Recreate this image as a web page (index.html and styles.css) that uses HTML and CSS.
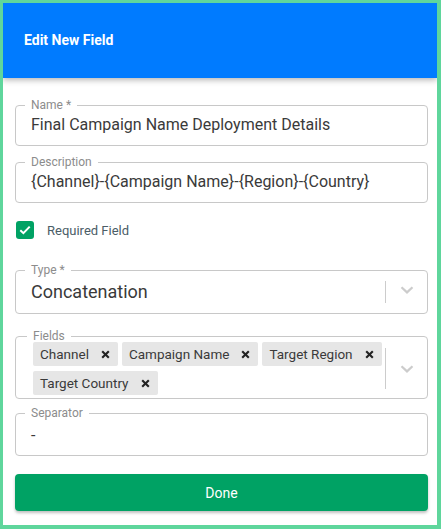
FILE: index.html
```html
<!DOCTYPE html>
<html lang="en">
<head>
<meta charset="utf-8">
<title>Edit New Field</title>
<link rel="stylesheet" href="styles.css">
</head>
<body>
<div class="frame">
  <header class="header">
    <h1 class="title">Edit New Field</h1>
  </header>
  <main class="content">
    <fieldset class="field field-name">
      <legend class="label">Name *</legend>
      <div class="value">Final Campaign Name Deployment Details</div>
    </fieldset>
    <fieldset class="field field-desc">
      <legend class="label">Description</legend>
      <div class="value">{Channel}-{Campaign Name}-{Region}-{Country}</div>
    </fieldset>
    <label class="check-row">
      <span class="checkbox">
        <svg width="12" height="10" viewBox="0 0 12 10"><path d="M1.3 5.2 L4.4 8.2 L10.7 1.6" fill="none" stroke="#fff" stroke-width="2"/></svg>
      </span>
      <span class="check-label">Required Field</span>
    </label>
    <fieldset class="field select field-type">
      <legend class="label">Type *</legend>
      <div class="select-row">
        <div class="value big">Concatenation</div>
        <span class="sep sep-type"></span>
        <span class="indicator">
          <svg width="14" height="8" viewBox="0 0 14 8"><path d="M1.5 1.2 L7 6.4 L12.5 1.2" fill="none" stroke="#cccccc" stroke-width="2.2"/></svg>
        </span>
      </div>
    </fieldset>
    <fieldset class="field select field-fields">
      <legend class="label">Fields</legend>
      <div class="select-row">
        <div class="chips">
          <span class="chip">Channel<svg class="x" width="9" height="9" viewBox="0 0 9 9"><path d="M1.2 1.2 L7.8 7.8 M7.8 1.2 L1.2 7.8" stroke="#222" stroke-width="2.1"/></svg></span>
          <span class="chip">Campaign Name<svg class="x" width="9" height="9" viewBox="0 0 9 9"><path d="M1.2 1.2 L7.8 7.8 M7.8 1.2 L1.2 7.8" stroke="#222" stroke-width="2.1"/></svg></span>
          <span class="chip">Target Region<svg class="x" width="9" height="9" viewBox="0 0 9 9"><path d="M1.2 1.2 L7.8 7.8 M7.8 1.2 L1.2 7.8" stroke="#222" stroke-width="2.1"/></svg></span>
          <span class="chip">Target Country<svg class="x" width="9" height="9" viewBox="0 0 9 9"><path d="M1.2 1.2 L7.8 7.8 M7.8 1.2 L1.2 7.8" stroke="#222" stroke-width="2.1"/></svg></span>
        </div>
        <span class="sep sep-fields"></span>
        <span class="indicator">
          <svg width="14" height="8" viewBox="0 0 14 8"><path d="M1.5 1.2 L7 6.4 L12.5 1.2" fill="none" stroke="#cccccc" stroke-width="2.2"/></svg>
        </span>
      </div>
    </fieldset>
    <fieldset class="field field-sep">
      <legend class="label">Separator</legend>
      <div class="value">-</div>
    </fieldset>
    <button class="done" type="button">Done</button>
  </main>
</div>
</body>
</html>
```
FILE: styles.css
```css
* { box-sizing: border-box; }
html, body { margin: 0; padding: 0; background: #fff; }
body { font-family: Roboto, "Liberation Sans", Arial, sans-serif; }

.frame {
  width: 441px;
  height: 529px;
  border-style: solid;
  border-color: #5fd69c;
  border-width: 3px 4px 4px 3px;
  background: #fff;
  overflow: hidden;
}

.header {
  height: 75px;
  background: #007bff;
  display: flex;
  align-items: center;
  padding-left: 21px;
  box-shadow: 0 2px 6px rgba(0, 0, 0, 0.3);
  position: relative;
}
.title {
  margin: 0;
  color: #fff;
  font-size: 14px;
  font-weight: 700;
  padding-bottom: 1px;
}

.content {
  padding: 21px 9px 0 12px;
  display: flex;
  flex-direction: column;
}

.field {
  margin: 0;
  border: 1px solid #c8c8c8;
  border-radius: 4px;
  padding: 0 15px 9px 15px;
  min-width: 0;
}
.label {
  margin-left: -6px;
  padding: 0 6px;
  font-size: 12px;
  line-height: 12px;
  color: #8c8c8c;
}
.value {
  font-size: 16px;
  line-height: 20px;
  color: #3a3a3a;
  padding-top: 4px;
  white-space: nowrap;
}
.field-name { padding-bottom: 10px; }
.field-desc { margin-top: 10px; padding-bottom: 10px; }

.check-row {
  display: flex;
  align-items: center;
  margin-top: 18px;
  padding-left: 1px;
}
.checkbox {
  width: 18px;
  height: 18px;
  border-radius: 3px;
  background: #00a264;
  display: flex;
  align-items: center;
  justify-content: center;
}
.check-label {
  margin-left: 13px;
  font-size: 13px;
  color: #4b5d67;
}

.select { padding-right: 0; }
.select-row {
  display: flex;
  align-items: center;
}
.select-row .value { flex: 1; }
.value.big {
  font-size: 18px;
  line-height: 24px;
  padding-top: 4px;
}
.field-type { margin-top: 25px; padding-bottom: 9px; }

.sep {
  width: 1px;
  background: #cccccc;
  flex: none;
}
.sep-type { height: 22px; margin-top: 4px; }
.sep-fields { height: 41px; }

.indicator {
  width: 41px;
  flex: none;
  display: flex;
  justify-content: center;
  align-items: center;
}

.field-fields { margin-top: 16px; padding-bottom: 3px; padding-left: 17px; }
.chips {
  flex: 1;
  display: flex;
  flex-wrap: wrap;
  gap: 5px 4px;
}
.chip {
  display: inline-flex;
  align-items: center;
  height: 24px;
  padding: 0 8px 0 7px;
  background: #e6e6e6;
  border-radius: 2px;
  font-size: 13.5px;
  color: #3a3a3a;
}
.chip .x { margin-left: 12px; }

.field-sep { margin-top: 8px; padding-bottom: 9px; }
.field-sep .value { padding-top: 7px; }

.done {
  margin-top: 18px;
  height: 37px;
  width: 100%;
  border: none;
  border-radius: 4px;
  background: #00a264;
  color: #fff;
  font-family: Roboto, "Liberation Sans", Arial, sans-serif;
  font-size: 14px;
  box-shadow: 0 2px 3px rgba(0, 0, 0, 0.25);
}
```
